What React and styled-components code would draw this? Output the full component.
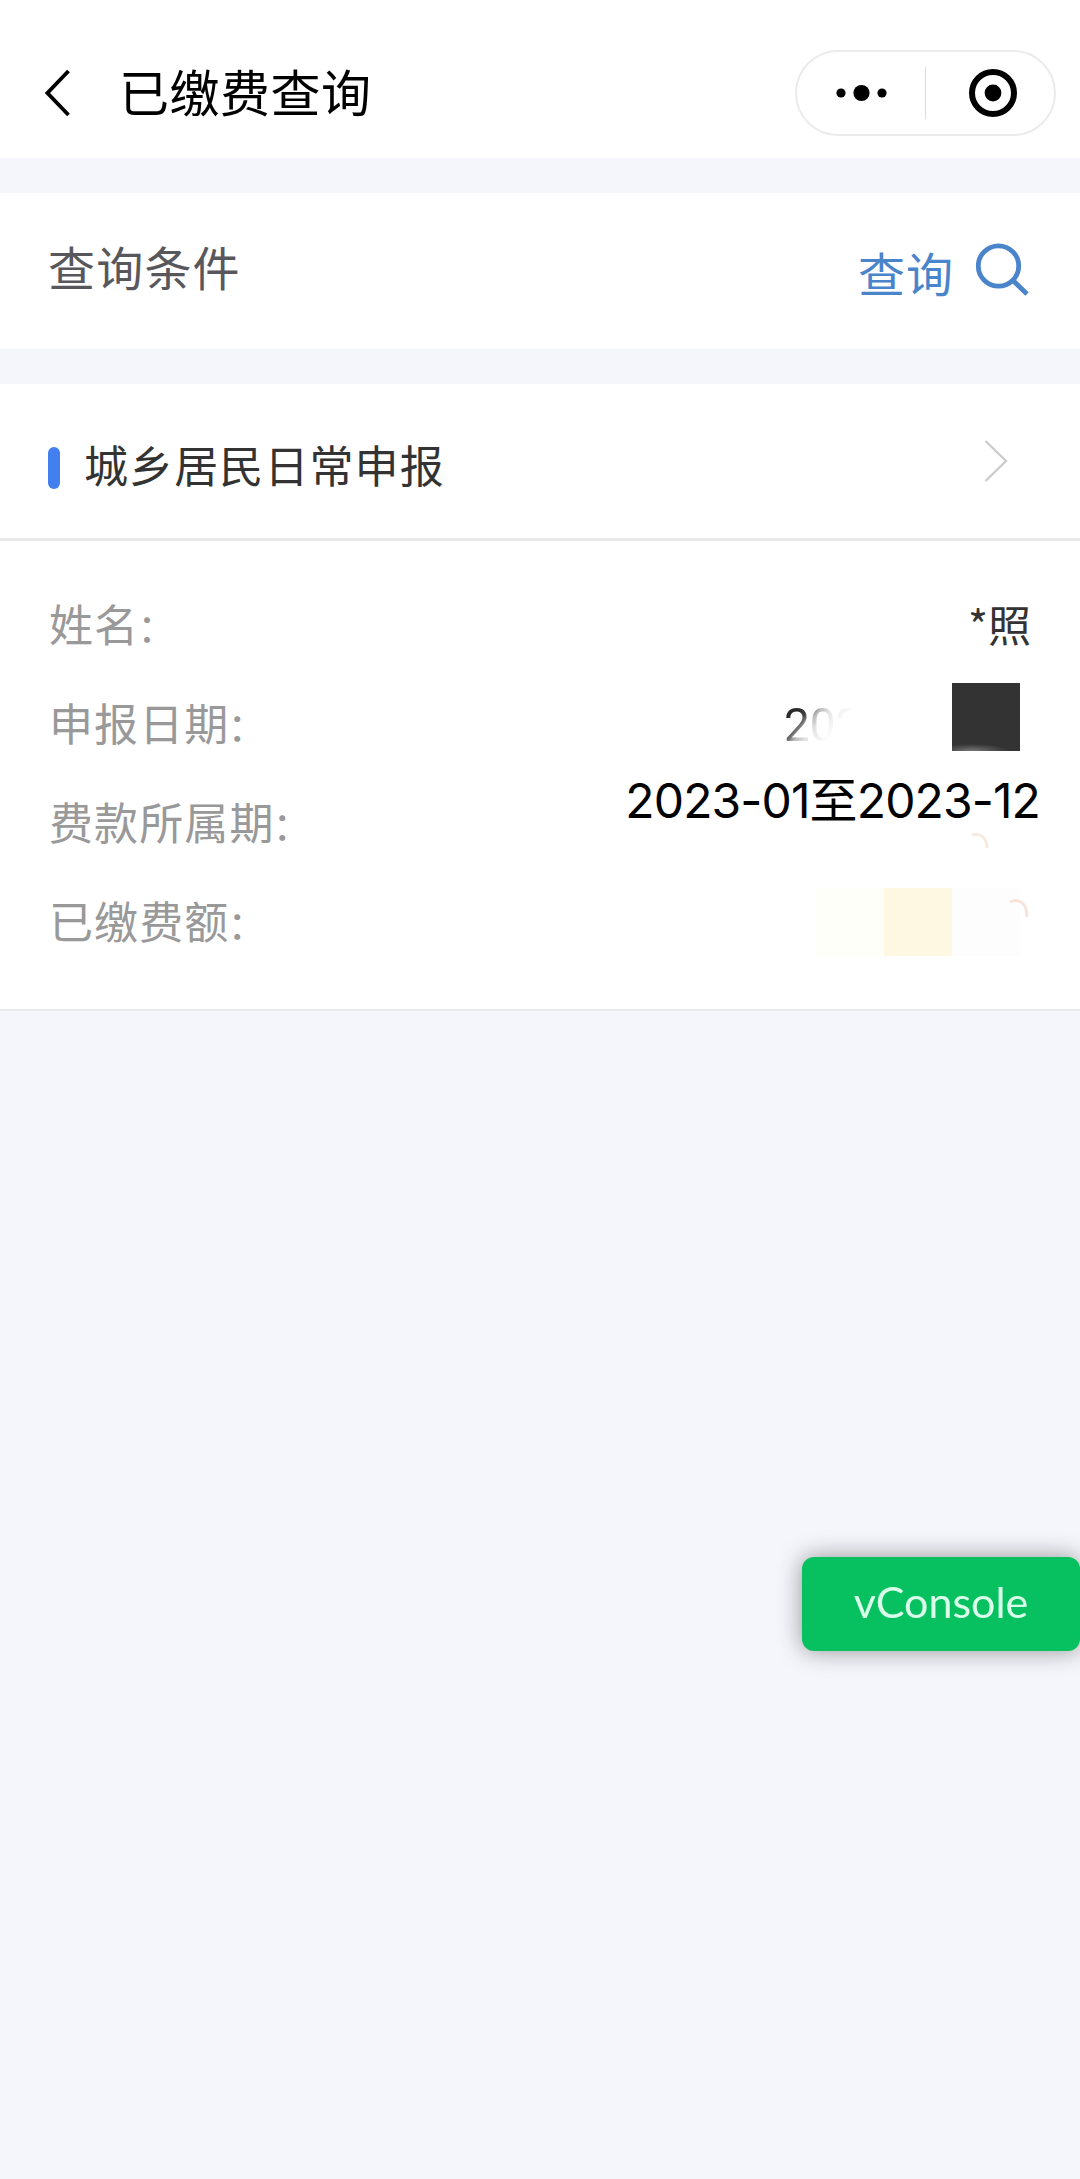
import React, { Component } from 'react';
import styled, { createGlobalStyle } from 'styled-components';

const GlobalStyle = createGlobalStyle`
  * {
    box-sizing: border-box;
  }
  body {
    margin: 0;
    background: #f4f6fb;
    font-family: 'Noto Sans CJK SC', sans-serif;
  }
`;

const Page = styled.div`
  display: flex;
  flex-direction: column;
  gap: 35px;
  width: 1080px;
  min-height: 2179px;
  overflow: hidden;
`;

const Header = styled.header`
  display: flex;
  align-items: center;
  height: 158px;
  padding: 28px 24px 0 45px;
  background: #fff;
`;

const Title = styled.h1`
  flex: 1;
  margin: 0 0 7px 48px;
  color: #000;
  font-size: 50px;
  font-weight: 400;
  letter-spacing: 0.5px;
  line-height: 60px;
`;

const Capsule = styled.div`
  display: flex;
  align-items: center;
  width: 261px;
  height: 86px;
  border: 2px solid #ebebeb;
  border-radius: 43px;
`;

const CapsuleButton = styled.div`
  display: flex;
  align-items: center;
  justify-content: center;
  width: ${props => props.$width}px;
  padding-left: ${props => props.$shift || 0}px;
`;

const Divider = styled.div`
  width: 1px;
  height: 52px;
  background: #dcdcdc;
`;

const SearchBar = styled.section`
  display: flex;
  align-items: center;
  justify-content: space-between;
  height: 156px;
  padding: 0 51px 0 48px;
  background: #fff;
`;

const SearchLabel = styled.div`
  margin-bottom: 10px;
  color: #58585c;
  font-size: 47px;
  letter-spacing: 1.2px;
  line-height: 60px;
`;

const SearchLink = styled.div`
  display: flex;
  gap: 21px;
  margin-top: 2px;
  color: #4a84cb;
  font-size: 47px;
  letter-spacing: 1px;
  line-height: 60px;
`;

const Card = styled.section`
  background: #fff;
  border-bottom: 2px solid #e9eaec;
`;

const CardHead = styled.div`
  display: flex;
  align-items: center;
  height: 157px;
  padding: 0 72px 0 48px;
  border-bottom: 3px solid #e9e9e9;
`;

const Marker = styled.i`
  width: 12px;
  height: 42px;
  margin: 14px 24px 0 0;
  border-radius: 6px;
  background: #4380ef;
`;

const CardTitle = styled.div`
  flex: 1;
  margin-top: 5px;
  color: #333;
  font-size: 44px;
  letter-spacing: 1.1px;
  line-height: 60px;
`;

const CardBody = styled.div`
  padding: 34px 40px 38px 48px;
`;

const Row = styled.div`
  display: flex;
  align-items: center;
  justify-content: space-between;
  height: 99px;
`;

const Label = styled.span`
  margin: 0 0 4px 1px;
  color: #999;
  font-size: 44px;
  letter-spacing: 1.1px;
  line-height: 60px;
`;

const Colon = styled.span`
  margin-left: -2px;
  font-size: 39px;
  line-height: 1;
`;

const Name = styled.span`
  margin: 0 9px 4px 0;
  color: #333;
  font-size: 43px;
  line-height: 60px;
`;

const DateValue = styled.div`
  display: flex;
  align-items: center;
  justify-content: space-between;
  width: 236px;
  margin-right: 20px;
`;

const FadedText = styled.span`
  margin-top: 2px;
  background: linear-gradient(130deg, #2a2a2a 20%, #444 28%, #777 32%, #bbb 37%, #e2e2e2 45%, #f3f3f3 56%, #fff 64%);
  background-clip: text;
  color: transparent;
  font-family: Roboto, sans-serif;
  font-size: 46px;
  line-height: 54px;
`;

const DarkTile = styled.i`
  width: 68px;
  height: 68px;
  margin-bottom: 14px;
  background: radial-gradient(ellipse 36px 7px at 30% 100%, #777, #333);
`;

const Period = styled.span`
  margin-bottom: 44px;
  color: #000;
  font-family: Inter, 'Noto Sans CJK SC', sans-serif;
  font-size: 48px;
  letter-spacing: -0.87px;
  line-height: 60px;
`;

const Amount = styled.div`
  position: relative;
  display: flex;
  margin-right: 20px;
`;

const Tile = styled.i`
  width: 68px;
  height: 68px;
  background: ${props => props.$color};
`;

const Traces = styled.svg`
  position: absolute;
  left: 140px;
  top: -60px;
`;

const ConsoleButton = styled.button`
  position: fixed;
  top: 1557px;
  right: 0;
  width: 278px;
  height: 94px;
  padding: 0 0 5px;
  border: 0;
  border-radius: 12px;
  background: #07c160;
  box-shadow: 0 0 24px rgba(0, 0, 0, 0.4);
  color: #d9ffea;
  font-family: Lato, sans-serif;
  font-size: 43px;
  line-height: 60px;
`;

const BackIcon = () => (
    <svg width="26" height="48" viewBox="0 0 26 48" fill="none" stroke="#000" strokeWidth="3.8">
        <path d="M23.5 2 2.5 24l21 22" />
    </svg>
);

const MoreIcon = () => (
    <svg width="52" height="18" viewBox="0 0 52 18">
        <circle cx="5" cy="9" r="4.6" />
        <circle cx="25.5" cy="9" r="8.1" />
        <circle cx="46" cy="9" r="4.6" />
    </svg>
);

const TargetIcon = () => (
    <svg width="48" height="48" viewBox="0 0 48 48">
        <circle cx="24" cy="24" r="21" fill="none" stroke="#000" strokeWidth="6" />
        <circle cx="24" cy="24" r="8.4" />
    </svg>
);

const SearchIcon = () => (
    <svg width="54" height="54" viewBox="0 0 54 54" fill="none" stroke="#4a84cb" strokeWidth="4.8">
        <circle cx="23.5" cy="24" r="20.2" />
        <path d="M37.5 38 52 52" />
    </svg>
);

const ArrowIcon = () => (
    <svg width="24" height="42" viewBox="0 0 24 42" fill="none" stroke="#ccc" strokeWidth="2.4">
        <path d="M1.5 1 22 21 1.5 41" />
    </svg>
);

class App extends Component {

    render() {
        return (
            <Page>
                <GlobalStyle />
                <Header>
                    <BackIcon />
                    <Title>已缴费查询</Title>
                    <Capsule>
                        <CapsuleButton $width={128} $shift={1}><MoreIcon /></CapsuleButton>
                        <Divider />
                        <CapsuleButton $width={128} $shift={6}><TargetIcon /></CapsuleButton>
                    </Capsule>
                </Header>

                <SearchBar>
                    <SearchLabel>查询条件</SearchLabel>
                    <SearchLink>
                        查询
                        <SearchIcon />
                    </SearchLink>
                </SearchBar>

                <Card>
                    <CardHead>
                        <Marker />
                        <CardTitle>城乡居民日常申报</CardTitle>
                        <ArrowIcon />
                    </CardHead>
                    <CardBody>
                        <Row>
                            <Label>姓名<Colon>：</Colon></Label>
                            <Name>*照</Name>
                        </Row>
                        <Row>
                            <Label>申报日期<Colon>：</Colon></Label>
                            <DateValue>
                                <FadedText>202</FadedText>
                                <DarkTile />
                            </DateValue>
                        </Row>
                        <Row>
                            <Label>费款所属期<Colon>：</Colon></Label>
                            <Period>2023-01至2023-12</Period>
                        </Row>
                        <Row>
                            <Label>已缴费额<Colon>：</Colon></Label>
                            <Amount>
                                <Tile $color="#fffffa" />
                                <Tile $color="#fef8e3" />
                                <Tile $color="#fdfdfd" />
                                {/* leftovers of the masked digits */}
                                <Traces width="80" height="110" viewBox="0 0 80 110" fill="none" strokeWidth="3">
                                    <path d="M16 7c8-2 15 2 15 13" stroke="#f5ebe0" />
                                    <path d="M54 74c8-4 17 0 17 15" stroke="#f8e3dc" />
                                </Traces>
                            </Amount>
                        </Row>
                    </CardBody>
                </Card>

                <ConsoleButton>vConsole</ConsoleButton>
            </Page>
        );
    }
}

export default App;
